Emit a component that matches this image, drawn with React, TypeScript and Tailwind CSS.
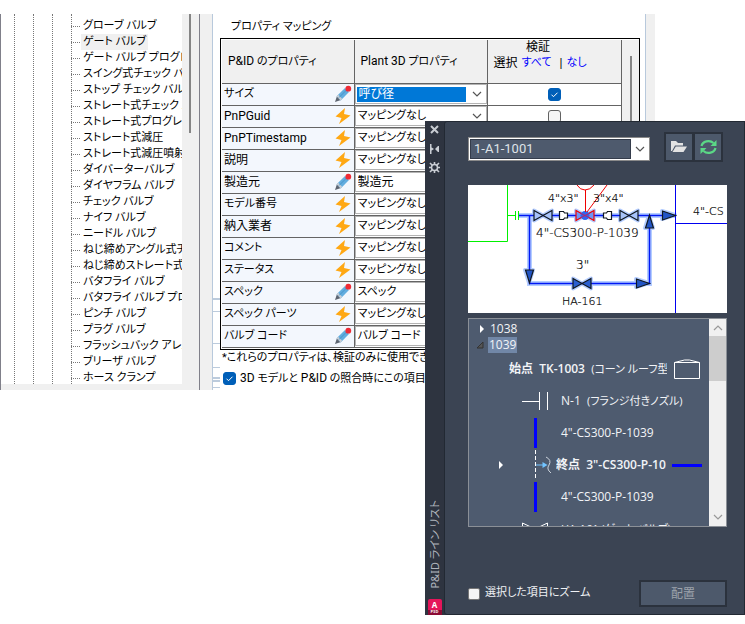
import React from "react";

const treeItems = [
  "グローブ バルブ",
  "ゲート バルブ",
  "ゲート バルブ プログレッシブ",
  "スイング式チェック バルブ",
  "ストップ チェック バルブ",
  "ストレート式チェック バルブ",
  "ストレート式プログレッシブ",
  "ストレート式減圧",
  "ストレート式減圧噴射",
  "ダイバーターバルブ",
  "ダイヤフラム バルブ",
  "チェック バルブ",
  "ナイフ バルブ",
  "ニードル バルブ",
  "ねじ締めアングル式チェック",
  "ねじ締めストレート式チェック",
  "バタフライ バルブ",
  "バタフライ バルブ プログレッシブ",
  "ピンチ バルブ",
  "プラグ バルブ",
  "フラッシュバック アレスター",
  "ブリーザ バルブ",
  "ホース クランプ",
];

type Mapping = { name: string; value: string; edited?: boolean; checked?: boolean };

const mappings: Mapping[] = [
  { name: "サイズ", value: "呼び径", edited: true, checked: true },
  { name: "PnPGuid", value: "マッピングなし" },
  { name: "PnPTimestamp", value: "マッピングなし" },
  { name: "説明", value: "マッピングなし" },
  { name: "製造元", value: "製造元", edited: true },
  { name: "モデル番号", value: "マッピングなし" },
  { name: "納入業者", value: "マッピングなし" },
  { name: "コメント", value: "マッピングなし" },
  { name: "ステータス", value: "マッピングなし" },
  { name: "スペック", value: "スペック", edited: true },
  { name: "スペック パーツ", value: "マッピングなし" },
  { name: "バルブ コード", value: "バルブ コード", edited: true },
];

function Chevron({ up = false, className = "" }: { up?: boolean; className?: string }) {
  return (
    <svg viewBox="0 0 10 6" className={`h-[6px] w-[10px] shrink-0 ${className}`} fill="none" stroke="currentColor">
      <path d={up ? "M1 5l4-4 4 4" : "M1 1l4 4 4-4"} strokeWidth="1.2" />
    </svg>
  );
}

function Pencil() {
  return (
    <svg viewBox="0 0 18 18" className="h-[18px] w-[18px] shrink-0">
      <path d="M1 17l2-6 4 4z" fill="#5d6470" />
      <path d="M2.6 11.2L11 3l4 4-8.300 8.400z" fill="#62addf" />
      <path d="M2.600 11.200l1.500-1.400 4 4-1.400 1.600z" fill="#c9ced4" />
      <path d="M5 12.500l7.500-7.500" stroke="#4793c8" />
      <circle cx="14.300" cy="3.700" r="2.900" fill="#ef2b36" />
    </svg>
  );
}

function Bolt() {
  return (
    <svg viewBox="0 0 18 18" className="h-[18px] w-[18px] shrink-0">
      <path d="M11 1L1.500 9.500l6 1.500L5 17l11.500-8.500-6.500-1.500z" fill="#ffa814" />
    </svg>
  );
}

const tick =
  "size-[13px] shrink-0 appearance-none rounded-[3px] border border-[#626262] bg-[#f5f5f5] checked:border-[#005fb8] checked:bg-[#005fb8]";

function Tick({ id, label, checked }: { id: string; label?: string; checked?: boolean }) {
  return (
    <span className="inline-grid place-items-center">
      <input id={id} type="checkbox" aria-label={label} defaultChecked={checked} className={`${tick} col-start-1 row-start-1`} />
      {checked && (
        <svg viewBox="0 0 13 13" className="pointer-events-none col-start-1 row-start-1 size-[13px]" fill="none" stroke="#fff">
          <path d="M3.500 6.700l2 2 4-4" />
        </svg>
      )}
    </span>
  );
}

function ValveTree() {
  return (
    <div className="flex w-[200px] shrink-0 flex-col border-x border-[#80808a] bg-[#f0f0f0]">
      <div className="flex h-[370px]">
        <div className="relative flex min-w-0 flex-1 flex-col overflow-hidden bg-white">
          <div className="flex h-1 shrink-0 items-end overflow-hidden pl-[82px] text-[11px] whitespace-nowrap">
            グローブ バルブ プログレ
          </div>
          <ul className="text-[11px] leading-4 whitespace-nowrap">
            {treeItems.map((item, i) => (
              <li key={item} className="flex h-4 items-center">
                <span className="ml-[70px] w-[9px] shrink-0 border-t border-dotted border-[#777]" />
                <span className={i === 1 ? "ml-px bg-[#f0f0f0] px-0.5" : "ml-px px-0.5"}>{item}</span>
              </li>
            ))}
          </ul>
          <div className="pointer-events-none absolute inset-y-0 left-[13px] flex gap-[18px]">
            {[0, 1, 2, 3].map((n) => (
              <span key={n} className="w-px border-l border-dotted border-[#777]" />
            ))}
          </div>
        </div>
        <div className="w-[17px] pl-[7px]">
          <div className="h-[119px] w-0.5 bg-[#858585]" />
        </div>
      </div>
    </div>
  );
}

function MappingTable() {
  return (
    <div className="flex h-[312px] w-[420px] border border-black bg-white pt-px pl-px">
      <table className="w-[399px] table-fixed border-collapse self-start text-[11px]">
        <colgroup>
          <col className="w-[132px]" />
          <col className="w-[133px]" />
          <col className="w-[134px]" />
        </colgroup>
        <thead>
          <tr className="h-[43px] border-b border-[#646464] bg-[#f0f0f0]">
            <th className="border-r border-[#646464] px-1.5 py-0 text-left font-normal">
              <span className="text-[12px]">P&amp;ID</span> のプロパティ
            </th>
            <th className="border-r border-[#646464] px-1.5 py-0 text-left font-normal">
              <span className="text-[12px]">Plant 3D</span> プロパティ
            </th>
            <th className="border-r border-[#646464] p-0 align-top font-normal">
              <div className="pr-8 text-[12px] leading-[15px]">検証</div>
              <div className="flex gap-1 pl-1.5 text-[12px] leading-4">
                <span>選択</span>
                <a href="#all" className="text-[11px] text-[#0000ff]">すべて</a>
                <span className="pl-1">|</span>
                <a href="#none" className="text-[11px] text-[#0000ff]">なし</a>
              </div>
            </th>
          </tr>
        </thead>
        <tbody>
          {mappings.map((m, i) => (
            <tr key={m.name} className="h-[22px] border-b border-[#646464]">
              <td className="border-r border-[#646464] bg-[#f3f7fd] p-0">
                <div className="flex h-[20px] items-center justify-between pr-[2px] pl-0.5">
                  <span className={/[ぁ-ヶ]/.test(m.name) ? "" : "text-[12px]"}>{m.name}</span>
                  {m.edited ? <Pencil /> : <Bolt />}
                </div>
              </td>
              <td className="border-r border-[#646464] p-0">
                <div className="flex h-[20px] items-center border border-[#b4b4b4] pl-px">
                  <select
                    aria-label={m.name}
                    className={
                      i === 0
                        ? "h-[15px] min-w-0 flex-1 appearance-none bg-[#0078d7] pl-0.5 text-[12px] leading-[15px] text-white"
                        : m.value === "製造元"
                          ? "h-[16px] min-w-0 flex-1 appearance-none pl-px text-[12px] leading-4"
                          : "h-[16px] min-w-0 flex-1 appearance-none pl-px leading-4"
                    }
                  >
                    <option>{m.value}</option>
                  </select>
                  <Chevron className="mr-1 ml-[6px] text-[#555]" />
                </div>
              </td>
              <td className="border-r border-[#646464] p-0">
                <div className="flex h-[20px] items-center justify-center">
                  <Tick id={`verify-${i}`} label={`${m.name} 検証`} checked={m.checked} />
                </div>
              </td>
            </tr>
          ))}
        </tbody>
      </table>
      <div className="flex-1 bg-[#f0f0f0] pt-4 pl-2">
        <div className="h-[260px] w-0.5 bg-[#858585]" />
      </div>
    </div>
  );
}

function FrameEdges() {
  return (
    <div className="flex w-[7px] shrink-0 flex-col">
      <div className="mt-[284px] h-0.5 bg-[#bccbdc]" />
      <div className="mt-[11px] h-px bg-[#bccbdc]" />
      <div className="mt-[31px] h-px bg-[#bccbdc]" />
      <div className="mt-[23px] h-px bg-[#bccbdc]" />
      <div className="mt-[9px] h-0.5 bg-[#bccbdc]" />
      <div className="mt-px h-0.5 bg-[#bccbdc]" />
      <div className="mt-[5px] h-px bg-[#bccbdc]" />
    </div>
  );
}

function MappingDialog() {
  return (
    <section className="flex h-[376px] w-[655px] overflow-hidden bg-white text-black [font-family:Roboto,'Noto_Sans_CJK_JP',sans-serif]">
      <ValveTree />
      <div className="w-3 shrink-0 bg-[#f0f0f0]" />
      <div className="flex flex-1 border-x border-[#b8c9dc]">
        <FrameEdges />
        <div className="flex flex-col">
          <h2 className="h-6 pt-[5px] pl-[11px] text-[11px] leading-4">プロパティ マッピング</h2>
          <MappingTable />
          <p className="pl-0.5 text-[11px] leading-[15px] whitespace-nowrap">*これらのプロパティは、検証のみに使用できます。</p>
          <div className="mt-[5px] flex items-center gap-1 pl-[3px] text-[11px] leading-4">
            <Tick id="compare" checked />
            <label htmlFor="compare">
              <span className="text-[12px]">3D</span> モデルと <span className="text-[12px]">P&amp;ID</span> の照合時にこの項目を比較
            </label>
          </div>
        </div>
      </div>
      <div className="w-[9px] shrink-0 bg-[#f0f0f0]" />
    </section>
  );
}

function Diagram() {
  const valve = (x: number, y: number) => `M${x} ${y - 5}v10l18-10v10z`;
  const reducers = "M91.500 26.500h4l1 1.500h3v5h-3l-1 1.500h-4zM143.500 26.500h-4l-1 1.500h-3v5h3l1 1.500h4z";
  return (
    <svg viewBox="0 0 259 128" className="h-[128px] w-[259px] bg-white" fill="none">
      <path d="M39.500 0V56.500H0M39.500 30.500H47M47.500 26v9M50.500 26v9" stroke="#00f000" />
      <path d="M51 30.500H207M61.500 30V98.500H181.500V30" stroke="#b4cdff" strokeWidth="5" />
      <g fill="#a5c1fa" stroke="#b4cdff" strokeWidth="4" strokeLinejoin="round">
        <path d={valve(66, 30.5)} />
        <path d={valve(108, 30.5)} />
        <path d={valve(152, 30.5)} />
        <path d={valve(105, 98.5)} />
        <path d="M194 26v8l13-4zM168 94v8l13-4zM57 85h8l-4 13zM177 43h8l-4-13z" />
      </g>
      <path d="M51 30.500H207M61.500 30V98.500H181.500V30" stroke="#0018f5" strokeWidth="1.500" />
      <path d="M207.500 0V128M207.500 38.500H259" stroke="#0000f0" />
      <g stroke="#101820" strokeWidth="1.200">
        <path d={valve(66, 30.5)} fill="#a7c3fa" />
        <path d={valve(152, 30.5)} fill="#a7c3fa" />
        <path d={valve(105, 98.5)} fill="#2a5fd0" />
        <path d={reducers} fill="#fff" />
        <path d="M194.500 26v9l13-4.500zM168.500 94v9l13-4.500zM57.500 85h8l-4 13zM177.500 43h8l-4-13z" fill="#2255c5" />
      </g>
      <path d={valve(108, 30.5)} stroke="#f00000" strokeWidth="1.200" fill="#7095f5" />
      <circle cx="117" cy="30.500" r="4.500" fill="#2f65ef" />
      <path d="M112 28l10 5M112 33l10-5" stroke="#c02060" />
      <path d="M109 0q3 5 8 5 5 0 9-5M117.500 5v22M139 0l-20 27" stroke="#f00000" />
      <g fill="#000" className="text-[12px] font-extralight [font-family:'DejaVu_Sans_Light','DejaVu_Sans',sans-serif]" stroke="#000" strokeWidth="0.200">
        <text x="80" y="17" className="text-[11px]">4"x3"</text>
        <text x="125" y="17" className="text-[11px]">3"x4"</text>
        <text x="68" y="52">4"-CS300-P-1039</text>
        <text x="108" y="84">3"</text>
        <text x="94" y="120" className="text-[11px]">HA-161</text>
        <text x="225" y="30" className="text-[11px]">4"-CS</text>
      </g>
    </svg>
  );
}

function LineList() {
  return (
    <div className="flex h-[209px] border border-[#8b9097] bg-[#4e5b6f]">
      <ul className="min-w-0 flex-1 overflow-hidden pt-0.5 text-[12px] leading-4 whitespace-nowrap text-[#f2f4f7]">
        <li className="flex h-4 items-center">
          <svg viewBox="0 0 8 8" className="mr-1 ml-[9px] size-2"><path d="M2 0l4 4-4 4z" fill="#fff" /></svg>
          <span>1038</span>
        </li>
        <li className="flex h-4 items-center">
          <svg viewBox="0 0 8 8" className="mr-1 ml-[7px] size-2"><path d="M7 1v6H1z" fill="#555" stroke="#333" /></svg>
          <span className="bg-[#7187a7] px-px">1039</span>
        </li>
        <li className="flex h-8 items-center pl-10">
          <span className="w-[158px] overflow-hidden">
            <span className="font-semibold">始点&nbsp; TK-1003</span>&nbsp; <span className="text-[11px]">(コーン ルーフ型タンク)</span>
          </span>
          <svg viewBox="0 0 28 22" className="ml-1.5 h-[22px] w-[28px] shrink-0" fill="none" stroke="#fff"><path d="M1.500 4.500h25v16h-25zM1.500 4.500l10-2.500h5l10 2.500" /></svg>
        </li>
        <li className="flex h-8 items-center">
          <svg viewBox="0 0 28 20" className="ml-[52px] h-5 w-7" fill="none" stroke="#fff"><path d="M1 10.500h17M18.500 1v18M26.500 1v18" /></svg>
          <span className="ml-3">N-1&nbsp; <span className="text-[11px]">(フランジ付きノズル)</span></span>
        </li>
        <li className="flex h-8 items-center">
          <span className="ml-[65px] h-[30px] w-[3px] bg-[#0000ff]" />
          <span className="ml-6">4"-CS300-P-1039</span>
        </li>
        <li className="flex h-8 items-center">
          <svg viewBox="0 0 8 8" className="ml-7 size-2"><path d="M2 0l4 4-4 4z" fill="#fff" /></svg>
          <svg viewBox="0 0 18 30" className="ml-[29px] h-[30px] w-[18px]" fill="none">
            <path d="M1.500 0v30" stroke="#fff" strokeDasharray="4 2" />
            <path d="M2 15h9" stroke="#72c4ff" />
            <path d="M8.500 12l5 3-5 3z" fill="#72c4ff" />
            <path d="M12 7q6 3 3 8-3 4 2 8" stroke="#ccd3dc" />
          </svg>
          <span className="ml-1 w-[110px] overflow-hidden font-semibold">終点&nbsp; 3"-CS300-P-1039</span>
          <span className="ml-1.5 h-[3px] w-[30px] shrink-0 bg-[#0000ff]" />
        </li>
        <li className="flex h-8 items-center">
          <span className="ml-[65px] h-[30px] w-[3px] bg-[#0000ff]" />
          <span className="ml-6">4"-CS300-P-1039</span>
        </li>
        <li className="flex h-8 items-center">
          <svg viewBox="0 0 28 20" className="ml-[52px] h-5 w-7" fill="none" stroke="#fff"><path d="M1.500 4v12l25-12v12z" /></svg>
          <span className="ml-3 text-[11px]">HA-161 (ゲート バルブ)</span>
        </li>
      </ul>
      <div className="flex w-[17px] shrink-0 flex-col items-center bg-[#f0f0f0] text-[#999]">
        <Chevron up className="mt-[6px] mb-[5px]" />
        <div className="h-[45px] w-full bg-[#cdcdcd]" />
        <Chevron className="mt-auto mb-[6px] text-[#999]" />
      </div>
    </div>
  );
}

function Palette() {
  return (
    <aside className="absolute top-[121px] right-0 flex h-[494px] w-[320px] bg-[#2e3440]">
      <div className="flex w-[19px] shrink-0 flex-col items-center pt-[3px] text-[#c9cdd3]">
        <button aria-label="閉じる" className="grid h-[19px] w-full place-items-center pb-2">
          <svg viewBox="0 0 9 9" className="size-[9px]" stroke="currentColor" strokeWidth="2"><path d="M1 1l7 7M8 1L1 8" /></svg>
        </button>
        <button aria-label="自動的に隠す" className="grid h-[19px] w-full place-items-center pb-2">
          <svg viewBox="0 0 9 10" className="h-[10px] w-[9px]" fill="currentColor"><path d="M0 0h1.500v10H0zM1 3l3 2-3 2zM9 2v6H8L5 5l3-3z" /></svg>
        </button>
        <button aria-label="プロパティ" className="grid h-[19px] w-full place-items-center pb-2">
          <svg viewBox="0 0 11 11" className="size-[11px]" fill="none" stroke="currentColor">
            <circle cx="5.500" cy="5.500" r="3" strokeWidth="1.500" />
            <path d="M5.500 0v2.500M5.500 8.500V11M0 5.500h2.500M8.500 5.500H11M1 1l2.500 2.500M10 1L7.500 3.500M1 10l2.500-2.500M10 10L7.500 7.500" strokeWidth="1.600" />
          </svg>
        </button>
        <h2 className="mt-auto rotate-180 text-[11px] leading-4 whitespace-nowrap text-[#b0b5bd] [font-family:'Noto_Sans','Noto_Sans_CJK_JP',sans-serif] [text-orientation:sideways] [writing-mode:vertical-rl]">
          P&amp;ID ライン リスト
        </h2>
        <div className="mt-[11px] flex h-4 w-[14px] flex-col items-center rounded-t-[2px] bg-[#e5155a] text-[8px] leading-[11px] font-bold text-white">
          A<span className="h-[5px] w-full bg-[#8b0b34] text-center text-[4px] leading-[4px]">P3D</span>
        </div>
      </div>
      <div className="flex min-w-0 flex-1 flex-col rounded-l-[3px] border border-[#222933] bg-[#3b4453] pt-2.5 pr-[17px] pb-[7px] pl-[23px]">
        <div className="flex items-center">
          <div className="mt-1 flex h-6 w-[182px] items-center border border-[#8a8a8a] bg-white p-px">
            <select aria-label="図面" className="h-5 w-[161px] appearance-none border border-[#343c4b] bg-[#4e5a6d] pl-[3px] text-[13px] leading-4 text-[#dfe3e8] [font-family:Roboto,sans-serif]">
              <option>1-A1-1001</option>
            </select>
            <Chevron className="ml-1 text-[#555]" />
          </div>
          <div className="ml-auto mr-1 flex gap-[3px] border-2 border-[#2b323d] bg-[#2b323d]">
            <button aria-label="開く" className="grid h-[26px] w-[26px] place-items-center bg-[#4d596b]">
              <svg viewBox="0 0 16 14" className="h-[14px] w-4" fill="#e3e3e3"><path d="M0 1h5l2 2h5v2.500H4L1 11H0z" /><path d="M4.800 6.500H16L12.500 12H1.500z" /></svg>
            </button>
            <button aria-label="更新" className="grid h-[26px] w-[26px] place-items-center bg-[#4d596b]">
              <svg viewBox="0 0 17 16" className="h-4 w-[17px]" fill="none" stroke="#5bd886" strokeWidth="2.200">
                <path d="M1.500 7a7 6 0 0 1 12-3M15.500 9a7 6 0 0 1-12 3" />
                <path d="M16.500 1v6h-6zM.5 15V9h6z" fill="#5bd886" stroke="none" />
              </svg>
            </button>
          </div>
        </div>
        <div className="mt-[23px]"><Diagram /></div>
        <div className="mt-[5px]"><LineList /></div>
        <div className="mt-auto flex items-center">
          <input id="zoom-selected" type="checkbox" className="size-3 appearance-none rounded-[2px] border border-[#777] bg-[#f5f5f5] checked:bg-[#005fb8]" />
          <label htmlFor="zoom-selected" className="ml-[5px] pb-1 text-[11px] leading-4 text-[#f0f2f5]">選択した項目にズーム</label>
          <button disabled className="ml-auto h-[27px] w-[88px] border-2 border-[#2b323d] bg-[#4d596b] text-[12px] text-[#9da3ac]">配置</button>
        </div>
      </div>
    </aside>
  );
}

export default function App() {
  return (
    <main className="relative min-h-[624px] overflow-hidden bg-white pt-[14px] [font-family:'Open_Sans','Noto_Sans_CJK_JP',sans-serif] [font-feature-settings:'palt']">
      <MappingDialog />
      <Palette />
    </main>
  );
}
